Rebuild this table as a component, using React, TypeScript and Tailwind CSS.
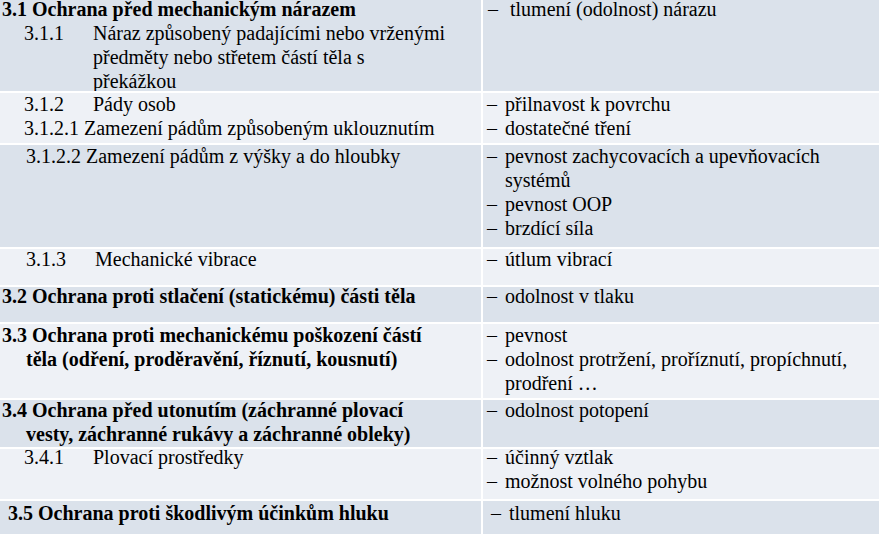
import React, { useEffect, useState } from "react";

type Row = {
  tone: "dark" | "light";
  h: number;
  left: React.ReactNode;
  right: React.ReactNode;
  pt: string;
};

function Num({ n, text, x = "pl-[24px]" }: { n: string; text: string; x?: string }) {
  return (
    <div className={`flex ${x}`}>
      <span className="w-[69px] shrink-0">{n}</span>
      <span>{text}</span>
    </div>
  );
}

function Head({ children }: { children: React.ReactNode }) {
  return <div className="pl-[26px] -indent-[24px] font-bold whitespace-nowrap">{children}</div>;
}

function Dash({ lines, dash = "w-[18px]", x = "pl-[4px]" }: { lines: string[]; dash?: string; x?: string }) {
  return (
    <div className={`flex ${x}`}>
      <span className={`${dash} shrink-0`}>–</span>
      <span className="whitespace-nowrap">
        {lines.map((l, i) => (
          <React.Fragment key={i}>
            {i > 0 && <br />}
            {l}
          </React.Fragment>
        ))}
      </span>
    </div>
  );
}

const rows: Row[] = [
  {
    tone: "dark",
    h: 91,
    pt: "-mt-[3px]",
    left: (
      <>
        <div className="pl-[2px] font-bold">3.1 Ochrana před mechanickým nárazem</div>
        <div className="flex pl-[24px]">
          <span className="w-[69px] shrink-0">3.1.1</span>
          <span className="whitespace-nowrap">
            Náraz způsobený padajícími nebo vrženými
            <br />
            předměty nebo střetem částí těla s
            <br />
            překážkou
          </span>
        </div>
      </>
    ),
    right: <Dash lines={["tlumení (odolnost) nárazu"]} dash="w-[22px]" x="pl-[5px]" />,
  },
  {
    tone: "light",
    h: 50,
    pt: "-mt-[1px]",
    left: (
      <>
        <Num n="3.1.2" text="Pády osob" />
        <div className="pl-[24px] whitespace-nowrap">3.1.2.1 Zamezení pádům způsobeným uklouznutím</div>
      </>
    ),
    right: (
      <>
        <Dash lines={["přilnavost k povrchu"]} />
        <Dash lines={["dostatečné tření"]} />
      </>
    ),
  },
  {
    tone: "dark",
    h: 102,
    pt: "-mt-[1px]",
    left: <div className="pl-[26px]">3.1.2.2 Zamezení pádům z výšky a do hloubky</div>,
    right: (
      <>
        <Dash lines={["pevnost zachycovacích a upevňovacích", "systémů"]} />
        <Dash lines={["pevnost OOP"]} />
        <Dash lines={["brzdící síla"]} />
      </>
    ),
  },
  {
    tone: "light",
    h: 36,
    pt: "-mt-[2px]",
    left: <Num n="3.1.3" text="Mechanické vibrace" x="pl-[26px]" />,
    right: <Dash lines={["útlum vibrací"]} />,
  },
  {
    tone: "dark",
    h: 35,
    pt: "-mt-[3px]",
    left: <div className="pl-[2px] font-bold whitespace-nowrap">3.2 Ochrana proti stlačení (statickému) části těla</div>,
    right: <Dash lines={["odolnost v tlaku"]} />,
  },
  {
    tone: "light",
    h: 74,
    pt: "-mt-[1px]",
    left: (
      <Head>
        3.3 Ochrana proti mechanickému poškození částí
        <br />
        těla (odření, proděravění, říznutí, kousnutí)
      </Head>
    ),
    right: (
      <>
        <Dash lines={["pevnost"]} />
        <Dash lines={["odolnost protržení, proříznutí, propíchnutí,", "prodření …"]} />
      </>
    ),
  },
  {
    tone: "dark",
    h: 47,
    pt: "-mt-[2px]",
    left: (
      <Head>
        3.4 Ochrana před utonutím (záchranné plovací
        <br />
        vesty, záchranné rukávy a záchranné obleky)
      </Head>
    ),
    right: <Dash lines={["odolnost potopení"]} />,
  },
  {
    tone: "light",
    h: 50,
    pt: "-mt-[4px]",
    left: <Num n="3.4.1" text="Plovací prostředky" />,
    right: (
      <>
        <Dash lines={["účinný vztlak"]} />
        <Dash lines={["možnost volného pohybu"]} />
      </>
    ),
  },
  {
    tone: "dark",
    h: 33,
    pt: "mt-0",
    left: <div className="pl-[8px] font-bold whitespace-nowrap">3.5 Ochrana proti škodlivým účinkům hluku</div>,
    right: <Dash lines={["tlumení hluku"]} x="pl-[8px]" />,
  },
];

export default function App() {
  // re-mount once the serif face is ready so no run is left in a fallback font
  const [ready, setReady] = useState(0);
  useEffect(() => {
    Promise.all([
      document.fonts.load('20px "Liberation Serif"', "Ochrana před"),
      document.fonts.load('bold 20px "Liberation Serif"', "Ochrana před"),
    ])
      .catch(() => null)
      .then(() => setReady((n) => n + 1));
  }, []);

  return (
    <div
      key={ready}
      className="grid h-[534px] w-[879px] grid-cols-[481px_1fr] gap-[2px] overflow-hidden bg-white font-['Liberation_Serif','Times_New_Roman',serif] text-[20px] leading-[24px] text-black"
    >
      {rows.map((r, i) => {
        const bg = r.tone === "dark" ? "bg-[#dbe2eb]" : "bg-[#eef1f6]";
        return (
          <React.Fragment key={i}>
            <div className={`${bg} overflow-hidden`} style={{ height: r.h }}>
              <div className={r.pt}>{r.left}</div>
            </div>
            <div className={`${bg} overflow-hidden`} style={{ height: r.h }}>
              <div className={r.pt}>{r.right}</div>
            </div>
          </React.Fragment>
        );
      })}
    </div>
  );
}
